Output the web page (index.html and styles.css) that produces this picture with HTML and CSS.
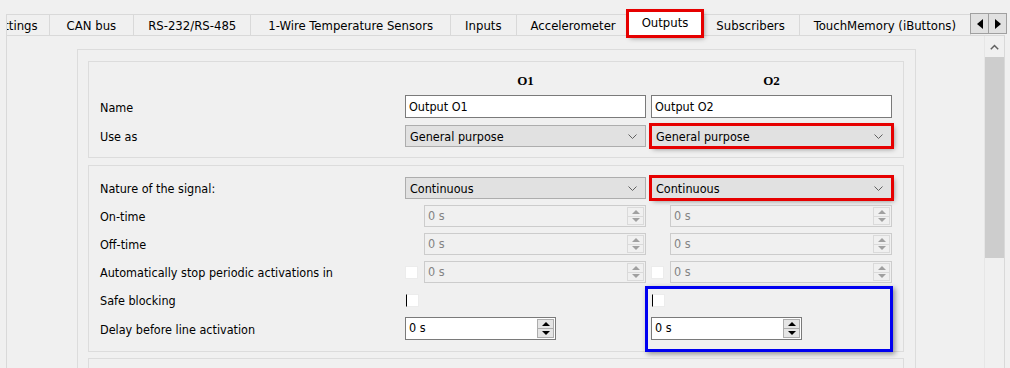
FILE: index.html
```html
<!DOCTYPE html>
<html lang="en">
<head>
    <meta charset="UTF-8">
    <title>Outputs</title>
    <link rel="stylesheet" href="styles.css">
</head>
<body>
    <div class="window">
        <div class="tabbar">
            <div class="tab-list">
                <div class="tab tab-clipped"><span>Settings</span></div>
                <div class="tab tab-wide">CAN bus</div>
                <div class="tab">RS-232/RS-485</div>
                <div class="tab tab-wide">1-Wire Temperature Sensors</div>
                <div class="tab">Inputs</div>
                <div class="tab">Accelerometer</div>
                <div class="tab active">Outputs</div>
                <div class="tab">Subscribers</div>
                <div class="tab">TouchMemory (iButtons)</div>
            </div>
            <div class="tab-scroll">
                <button class="scroll-btn"><svg width="6" height="10" viewBox="0 0 6 10"><path d="M6 0 L0 5 L6 10 Z"/></svg></button>
                <button class="scroll-btn"><svg width="6" height="10" viewBox="0 0 6 10"><path d="M0 0 L6 5 L0 10 Z"/></svg></button>
            </div>
        </div>

        <div class="panel">
            <div class="scroll-area">
                <div class="frame-outer">
                    <section class="group group-main">
                        <div class="form-grid">
                            <div></div>
                            <div class="col-head">O1</div>
                            <div class="col-head">O2</div>

                            <div class="label">Name</div>
                            <input class="text-input" type="text" value="Output O1">
                            <input class="text-input" type="text" value="Output O2">

                            <div class="label">Use as</div>
                            <div class="combo">General purpose<svg class="chevron" width="9" height="5" viewBox="0 0 9 5"><polyline points="0.5,0.5 4.5,4.5 8.5,0.5"/></svg></div>
                            <div class="combo marked">General purpose<svg class="chevron" width="9" height="5" viewBox="0 0 9 5"><polyline points="0.5,0.5 4.5,4.5 8.5,0.5"/></svg></div>
                        </div>
                    </section>

                    <section class="group group-signal">
                        <div class="form-grid signal-grid">
                            <div class="label">Nature of the signal:</div>
                            <div class="combo">Continuous<svg class="chevron" width="9" height="5" viewBox="0 0 9 5"><polyline points="0.5,0.5 4.5,4.5 8.5,0.5"/></svg></div>
                            <div class="combo marked">Continuous<svg class="chevron" width="9" height="5" viewBox="0 0 9 5"><polyline points="0.5,0.5 4.5,4.5 8.5,0.5"/></svg></div>

                            <div class="label">On-time</div>
                            <div class="spin disabled indent"><span class="spin-value">0 s</span><span class="spin-btns"><span class="spin-up"></span><span class="spin-down"></span></span></div>
                            <div class="spin disabled indent"><span class="spin-value">0 s</span><span class="spin-btns"><span class="spin-up"></span><span class="spin-down"></span></span></div>

                            <div class="label">Off-time</div>
                            <div class="spin disabled indent"><span class="spin-value">0 s</span><span class="spin-btns"><span class="spin-up"></span><span class="spin-down"></span></span></div>
                            <div class="spin disabled indent"><span class="spin-value">0 s</span><span class="spin-btns"><span class="spin-up"></span><span class="spin-down"></span></span></div>

                            <div class="label">Automatically stop periodic activations in</div>
                            <div class="cell-row">
                                <span class="check"></span>
                                <div class="spin disabled"><span class="spin-value">0 s</span><span class="spin-btns"><span class="spin-up"></span><span class="spin-down"></span></span></div>
                            </div>
                            <div class="cell-row">
                                <span class="check"></span>
                                <div class="spin disabled"><span class="spin-value">0 s</span><span class="spin-btns"><span class="spin-up"></span><span class="spin-down"></span></span></div>
                            </div>

                            <div class="label">Safe blocking</div>
                            <div class="cell-row"><span class="check focus"></span></div>
                            <div class="cell-row"><span class="check focus"></span></div>

                            <div class="label">Delay before line activation</div>
                            <div class="spin short"><span class="spin-value">0 s</span><span class="spin-btns"><span class="spin-up"></span><span class="spin-down"></span></span></div>
                            <div class="spin short"><span class="spin-value">0 s</span><span class="spin-btns"><span class="spin-up"></span><span class="spin-down"></span></span></div>
                        </div>
                        <div class="mark-blue"></div>
                    </section>

                    <section class="group group-next"></section>
                </div>
            </div>

            <div class="vscroll">
                <div class="vscroll-up"><svg width="9" height="6" viewBox="0 0 9 6"><polyline points="0.8,5.2 4.5,1.5 8.2,5.2"/></svg></div>
                <div class="vscroll-thumb"></div>
            </div>
        </div>
    </div>
</body>
</html>
```

FILE: styles.css
```css
* {
    box-sizing: border-box;
}

body {
    margin: 0;
    background-color: #f0f0f0;
    font-family: "DejaVu Sans Condensed", "Liberation Sans", sans-serif;
    font-size: 12.5px;
    color: #000;
    overflow: hidden;
}

.window {
    width: 1010px;
    height: 368px;
    padding-left: 6px;
}

/* tab bar */

.tabbar {
    display: flex;
    align-items: flex-end;
    height: 35px;
}

.tab-list {
    display: flex;
    align-items: flex-end;
    width: 964px;
    font-size: 13px;
}

.tab {
    height: 21px;
    padding: 0 14px;
    margin-right: -1px;
    border: 1px solid #d9d9d9;
    border-bottom: none;
    background: #f0f0f0;
    line-height: 21px;
    white-space: nowrap;
}

.tab-wide {
    padding: 0 17px;
}

.tab-clipped {
    display: flex;
    justify-content: flex-end;
    width: 49px;
    padding: 0 11px 0 0;
    overflow: hidden;
}

.tab.active {
    position: relative;
    z-index: 2;
    height: 25px;
    margin: 0 -1px -1px -2px;
    padding: 0 13px;
    background: #fff;
    line-height: 22px;
    outline: 3px solid #e60000;
    outline-offset: -1px;
    box-shadow: 2px 2px 5px rgba(0,0,0,0.45);
}

.tab-scroll {
    display: flex;
    margin-bottom: 1px;
}

.scroll-btn {
    display: flex;
    align-items: center;
    justify-content: center;
    width: 19px;
    height: 21px;
    padding: 0;
    border: 1px solid #a0a0a0;
    background: #e1e1e1;
}

.scroll-btn + .scroll-btn {
    margin-left: -1px;
}

.scroll-btn path {
    fill: #000;
}

/* page panel */

.panel {
    display: flex;
    width: 999px;
    height: 340px;
    border: 1px solid #d9d9d9;
    overflow: hidden;
}

.scroll-area {
    flex: 1;
}

.vscroll {
    display: flex;
    flex-direction: column;
    width: 20px;
    border-left: 1px solid #e6e6e6;
}

.vscroll-up {
    display: flex;
    align-items: center;
    justify-content: center;
    height: 21px;
}

.vscroll-up polyline {
    fill: none;
    stroke: #606060;
    stroke-width: 1.5;
}

.vscroll-thumb {
    height: 201px;
    background: #cdcdcd;
}

.frame-outer {
    width: 839px;
    height: 330px;
    margin: 13px 0 0 70px;
    padding: 11px 11px 0 10px;
    border: 1px solid #dcdcdc;
    border-bottom: none;
}

.group {
    position: relative;
    border: 1px solid #dcdcdc;
    padding: 0 11px;
}

.group-main {
    padding-top: 11px;
    padding-bottom: 10px;
    margin-bottom: 7px;
}

.group-signal {
    padding-top: 11px;
    padding-bottom: 11px;
    margin-bottom: 6px;
}

.group-next {
    height: 30px;
}

.form-grid {
    display: grid;
    grid-template-columns: 300px 241px 241px;
    grid-template-rows: 16px 23px 23px;
    column-gap: 5px;
    row-gap: 6px;
    align-items: center;
}

.signal-grid {
    grid-template-rows: repeat(5, 22px) 23px;
}

.col-head {
    text-align: center;
    font-family: "Liberation Serif", serif;
    font-weight: bold;
    font-size: 13px;
}

.label {
    white-space: nowrap;
    padding-top: 1px;
}

.text-input {
    height: 23px;
    width: 100%;
    margin: 0;
    padding: 0 3px;
    border: 1px solid #7a7a7a;
    background: #fff;
    font: inherit;
    color: #000;
}

.combo {
    display: flex;
    align-items: center;
    justify-content: space-between;
    height: 22px;
    padding: 0 8px 0 4px;
    border: 1px solid #adadad;
    background: #e1e1e1;
    align-self: end;
}

.combo.marked {
    outline: 3px solid #e60000;
    outline-offset: -1px;
    box-shadow: 2px 2px 5px rgba(0,0,0,0.45);
}

.chevron polyline {
    fill: none;
    stroke: #606060;
    stroke-width: 1;
}

.spin {
    display: flex;
    height: 22px;
    border: 1px solid #7a7a7a;
    background: #fff;
}

.spin.short {
    width: 151px;
    height: 23px;
}

.spin.indent {
    margin-left: 19px;
}

.cell-row .spin {
    flex: 1;
}

.spin-value {
    flex: 1;
    padding-left: 3px;
    line-height: 20px;
}

.spin-btns {
    display: flex;
    flex-direction: column;
    width: 17px;
    margin: 1px 1px 1px 0;
}

.spin-up,
.spin-down {
    flex: 1;
    display: flex;
    align-items: center;
    justify-content: center;
    border: 1px solid #adadad;
    background: #e5e5e5;
}

.spin-down {
    margin-top: -1px;
}

.spin-up::after {
    content: "";
    border-left: 4px solid transparent;
    border-right: 4px solid transparent;
    border-bottom: 4px solid #000;
}

.spin-down::after {
    content: "";
    border-left: 4px solid transparent;
    border-right: 4px solid transparent;
    border-top: 4px solid #000;
}

.spin.disabled {
    border-color: #cccccc;
    background: #f0f0f0;
    color: #838383;
}

.spin.disabled .spin-up,
.spin.disabled .spin-down {
    border-color: #dadada;
    background: #f0f0f0;
}

.spin.disabled .spin-up::after {
    border-bottom-color: #a0a0a0;
}

.spin.disabled .spin-down::after {
    border-top-color: #a0a0a0;
}

.cell-row {
    display: flex;
    align-items: center;
    gap: 6px;
}

.check {
    width: 13px;
    height: 13px;
    border: 1px solid #ececec;
    background: #fff;
}

.check.focus {
    margin-left: 1px;
    border-left-color: #000;
}

.mark-blue {
    position: absolute;
    left: 556px;
    top: 120px;
    width: 248px;
    height: 66px;
    border: 3px solid #0000f0;
    box-shadow: 2px 2px 5px rgba(0,0,0,0.4);
    pointer-events: none;
}
```
